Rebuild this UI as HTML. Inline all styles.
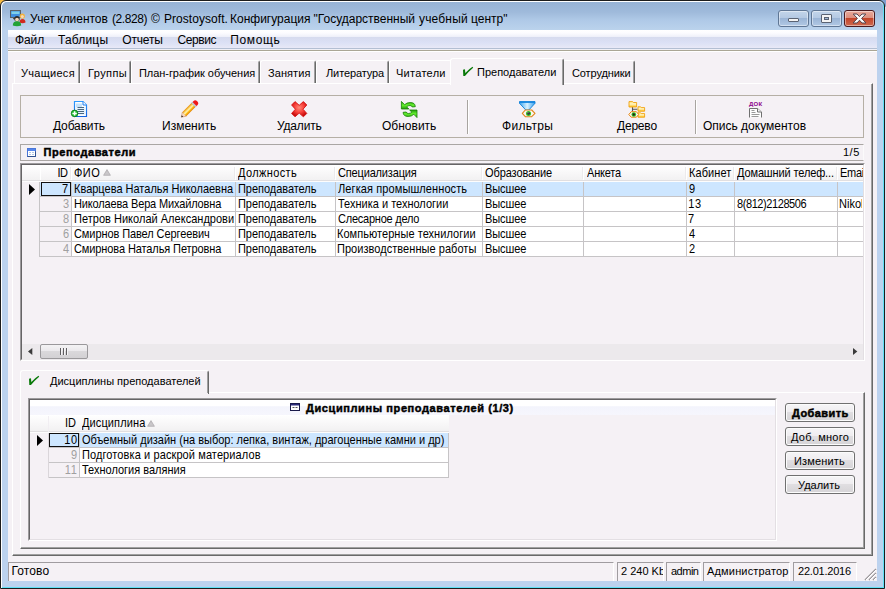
<!DOCTYPE html>
<html lang="ru"><head><meta charset="utf-8"><title>Учет клиентов</title>
<style>
html,body{margin:0;padding:0}
body{width:886px;height:589px;overflow:hidden;position:relative;background:#fff;font-family:"Liberation Sans",sans-serif;font-size:11px;color:#000}
div,svg.a,span.t{position:absolute}
.t{white-space:nowrap;display:block}
.clip{overflow:hidden}
#frame{left:0;top:0;width:885px;height:589px;background:#bcd2ee;border:1px solid #1c1c1c;border-radius:6px 6px 0 0;box-sizing:border-box;box-shadow:inset 1px 1px 0 #fff, inset -1px -1px 0 #5fe0f5}
#titlegrad{left:2px;top:2px;width:881px;height:28px;background:linear-gradient(#97b3d5 0,#9fbadb 10px,#afc9e7 18px,#bbd3ec 28px);border-radius:5px 5px 0 0}
#client{left:8px;top:30px;width:869px;height:551px;background:#f5f1f5}
</style></head>
<body>
<div id="cornerL" style="left:0;top:0;width:8px;height:8px;background:#f5b942"></div><div id="cornerR" style="left:878px;top:0;width:8px;height:589px;background:linear-gradient(#7f9fcf 0,#7f9fcf 6px,#b0b0b8 6px,#b0b0b8 7px,#dcdcee 7px)"></div>
<div id="frame"></div>
<div id="titlegrad"></div>
<div id="client"></div>
<svg class="a" style="left:10px;top:10px" width="17" height="17" viewBox="0 0 17 17">
<rect x="0.5" y="0.5" width="10" height="7" fill="#3f8fe0" stroke="#5b6166"/>
<rect x="1.5" y="1.5" width="8" height="2.5" fill="#7fd0e8"/>
<rect x="3" y="8" width="4" height="1.2" fill="#555"/>
<circle cx="12.3" cy="6" r="2.6" fill="#f2b13a"/>
<circle cx="12.3" cy="6.5" r="1.5" fill="#f9d9b8"/>
<path d="M9.5 12.5 q0-3.5 3-3.5 q3 0 3 3.5 q-3 1.3-6 0z" fill="#d22a1e"/>
<circle cx="7" cy="8.7" r="2.7" fill="#2a2a2a"/>
<circle cx="7" cy="9.6" r="1.9" fill="#f7d6b5"/>
<path d="M2.8 15.5 q0-4.3 4.2-4.3 q4.200 0 4.200 4.300 q-4.200 1.600-8.400 0z" fill="#21a336"/>
</svg>
<span class="t" id="t1" style="left:30px;top:10.84px;font-size:12px;line-height:16px;letter-spacing:-0.333px;">Учет</span>
<span class="t" id="t2" style="left:57.3px;top:10.84px;font-size:12px;line-height:16px;letter-spacing:-0.043px;">клиентов</span>
<span class="t" id="t3" style="left:112px;top:10.84px;font-size:12px;line-height:16px;letter-spacing:-0.417px;">(2.828)</span>
<span class="t" id="t4" style="left:151px;top:10.84px;font-size:12px;line-height:16px;">©</span>
<span class="t" id="t5" style="left:164px;top:10.84px;font-size:12px;line-height:16px;letter-spacing:0.045px;">Prostoysoft.</span>
<span class="t" id="t6" style="left:230px;top:10.84px;font-size:12px;line-height:16px;">Конфигурация</span>
<span class="t" id="t7" style="left:313.5px;top:10.84px;font-size:12px;line-height:16px;">"Государственный</span>
<span class="t" id="t8" style="left:419px;top:10.84px;font-size:12px;line-height:16px;letter-spacing:0.167px;">учебный</span>
<span class="t" id="t9" style="left:471px;top:10.84px;font-size:12px;line-height:16px;">центр"</span>
<div class="a" style="left:778px;top:10px;width:31px;height:17px;background:linear-gradient(#c3d5ea 0%,#b4c9e3 45%,#9bb5d6 50%,#b1c8e4 100%);border:1px solid #5f7694;border-radius:3px;box-shadow:inset 0 0 0 1px rgba(255,255,255,.45);box-sizing:border-box"></div>
<div class="a" style="left:811px;top:10px;width:31px;height:17px;background:linear-gradient(#c3d5ea 0%,#b4c9e3 45%,#9bb5d6 50%,#b1c8e4 100%);border:1px solid #5f7694;border-radius:3px;box-shadow:inset 0 0 0 1px rgba(255,255,255,.45);box-sizing:border-box"></div>
<div class="a" style="left:844px;top:10px;width:31px;height:17px;background:linear-gradient(#e9a99a 0%,#dc8f7f 45%,#c4452a 50%,#cf6a50 100%);border:1px solid #4a1a1f;border-radius:3px;box-shadow:inset 0 0 0 1px rgba(255,255,255,.45);box-sizing:border-box"></div>
<div class="a" style="left:788px;top:18px;width:11px;height:4px;background:#f4f4f4;border:1px solid #5a6373;border-radius:1px;box-sizing:border-box"></div>
<div class="a" style="left:821px;top:14px;width:11px;height:9px;background:#f4f4f4;border:1px solid #5a6373;border-radius:1px;box-sizing:border-box"></div>
<div class="a" style="left:824px;top:17px;width:5px;height:3px;background:#9fb6d4;border:1px solid #5a6373;box-sizing:border-box"></div>
<svg class="a" style="left:852px;top:13px" width="15" height="11" viewBox="0 0 15 11"><path d="M1.200 1 h3.800 l2.500 2.600 l2.500-2.600 h3.800 l-4.200 4.400 l4.400 4.600 h-4 l-2.500-2.800 l-2.500 2.800 h-4 l4.400-4.600z" fill="#fbfbfb" stroke="#564650" stroke-width="1" stroke-linejoin="round"/></svg>
<div class="a" style="left:8px;top:30px;width:869px;height:18px;background:linear-gradient(#ffffff 0,#fcfcff 3px,#eff1fa 6.500px,#d6dbee 7px,#dbe0f5 12px,#e0e4f6 15px,#e9e9f7 18px);"></div>
<div class="a" style="left:8px;top:48px;width:869px;height:1px;background:#b3bfd3"></div>
<div class="a" style="left:8px;top:49px;width:869px;height:1px;background:#f0f0f7"></div>
<div class="a" style="left:8px;top:50px;width:869px;height:1px;background:#aaa695"></div>
<div class="a" style="left:8px;top:51px;width:869px;height:1px;background:#ffffff"></div>
<span class="t" id="t10" style="left:15px;top:31.84px;font-size:12px;line-height:16px;letter-spacing:-0.100px;">Файл</span>
<span class="t" id="t11" style="left:58px;top:31.84px;font-size:12px;line-height:16px;letter-spacing:0.167px;">Таблицы</span>
<span class="t" id="t12" style="left:122.3px;top:31.84px;font-size:12px;line-height:16px;letter-spacing:-0.180px;">Отчеты</span>
<span class="t" id="t13" style="left:177.4px;top:31.84px;font-size:12px;line-height:16px;letter-spacing:-0.400px;">Сервис</span>
<span class="t" id="t14" style="left:230.3px;top:31.84px;font-size:12px;line-height:16px;letter-spacing:0.620px;">Помощь</span>
<div class="a" style="left:12px;top:83px;width:861px;height:473px;background:#f5f1f5;border-left:1px solid #fff;border-top:1px solid #fff;border-right:1px solid #696969;border-bottom:1px solid #696969;box-sizing:border-box"></div>
<div class="a" style="left:13px;top:84px;width:859px;height:471px;border-right:1px solid #a0a0a0;border-bottom:1px solid #a0a0a0;box-sizing:border-box"></div>
<div class="a" style="left:14px;top:60px;width:66px;height:23px;background:#f5f1f5;border-left:1px solid #fff;border-top:1px solid #fff;border-right:1px solid #696969;border-top-left-radius:3px;border-top-right-radius:3px;box-sizing:border-box"></div>
<div class="a" style="left:78px;top:62px;width:1px;height:21px;background:#a0a0a0"></div>
<div class="a" style="left:80px;top:60px;width:51px;height:23px;background:#f5f1f5;border-left:1px solid #fff;border-top:1px solid #fff;border-right:1px solid #696969;border-top-left-radius:3px;border-top-right-radius:3px;box-sizing:border-box"></div>
<div class="a" style="left:129px;top:62px;width:1px;height:21px;background:#a0a0a0"></div>
<div class="a" style="left:131px;top:60px;width:129px;height:23px;background:#f5f1f5;border-left:1px solid #fff;border-top:1px solid #fff;border-right:1px solid #696969;border-top-left-radius:3px;border-top-right-radius:3px;box-sizing:border-box"></div>
<div class="a" style="left:258px;top:62px;width:1px;height:21px;background:#a0a0a0"></div>
<div class="a" style="left:260px;top:60px;width:56px;height:23px;background:#f5f1f5;border-left:1px solid #fff;border-top:1px solid #fff;border-right:1px solid #696969;border-top-left-radius:3px;border-top-right-radius:3px;box-sizing:border-box"></div>
<div class="a" style="left:314px;top:62px;width:1px;height:21px;background:#a0a0a0"></div>
<div class="a" style="left:316px;top:60px;width:73px;height:23px;background:#f5f1f5;border-left:1px solid #fff;border-top:1px solid #fff;border-right:1px solid #696969;border-top-left-radius:3px;border-top-right-radius:3px;box-sizing:border-box"></div>
<div class="a" style="left:387px;top:62px;width:1px;height:21px;background:#a0a0a0"></div>
<div class="a" style="left:389px;top:60px;width:63px;height:23px;background:#f5f1f5;border-left:1px solid #fff;border-top:1px solid #fff;border-top-left-radius:3px;border-top-right-radius:3px;box-sizing:border-box"></div>
<div class="a" style="left:562px;top:60px;width:73px;height:23px;background:#f5f1f5;border-left:1px solid #fff;border-top:1px solid #fff;border-right:1px solid #696969;border-top-left-radius:3px;border-top-right-radius:3px;box-sizing:border-box"></div>
<div class="a" style="left:633px;top:62px;width:1px;height:21px;background:#a0a0a0"></div>
<div class="a" style="left:450px;top:58px;width:114px;height:27px;background:#f5f1f5;border-left:1px solid #fff;border-top:1px solid #fff;border-right:1px solid #696969;border-top-left-radius:3px;border-top-right-radius:3px;box-sizing:border-box"></div>
<div class="a" style="left:562px;top:60px;width:1px;height:25px;background:#a0a0a0"></div>
<span class="t" id="t15" style="left:21px;top:65.69px;font-size:11px;line-height:15px;letter-spacing:0.286px;">Учащиеся</span>
<span class="t" id="t16" style="left:88px;top:65.69px;font-size:11px;line-height:15px;letter-spacing:0.400px;">Группы</span>
<span class="t" id="t17" style="left:139px;top:65.69px;font-size:11px;line-height:15px;letter-spacing:-0.053px;">План-график обучения</span>
<span class="t" id="t18" style="left:268px;top:65.69px;font-size:11px;line-height:15px;letter-spacing:0.083px;">Занятия</span>
<span class="t" id="t19" style="left:326px;top:65.69px;font-size:11px;line-height:15px;letter-spacing:-0.111px;">Литература</span>
<span class="t" id="t20" style="left:396px;top:65.69px;font-size:11px;line-height:15px;letter-spacing:0.286px;">Читатели</span>
<span class="t" id="t21" style="left:572px;top:65.69px;font-size:11px;line-height:15px;letter-spacing:-0.111px;">Сотрудники</span>
<span class="t" id="t22" style="left:477px;top:64.69px;font-size:11px;line-height:15px;">Преподаватели</span>
<svg class="a" style="left:462px;top:66px" width="12" height="11" viewBox="0 0 12 11"><path d="M1 3.700 L3 3.200 L3.300 7 Q7 3 10.500 0.800 L11.200 1.700 Q6 6 3 10 L1.300 10 Z" fill="#0a7a0a"/></svg>
<div class="a" style="left:20px;top:95px;width:844px;height:43px;border:1px solid #b5afa5;box-sizing:border-box"></div>
<div class="a" style="left:467px;top:100px;width:1px;height:34px;background:#a8a4a0"></div>
<div class="a" style="left:468px;top:100px;width:1px;height:34px;background:#fff"></div>
<div class="a" style="left:695px;top:100px;width:1px;height:34px;background:#a8a4a0"></div>
<div class="a" style="left:696px;top:100px;width:1px;height:34px;background:#fff"></div>
<span class="t" id="t23" style="left:53px;top:117.84px;font-size:12px;line-height:16px;letter-spacing:-0.143px;">Добавить</span>
<span class="t" id="t24" style="left:162px;top:117.84px;font-size:12px;line-height:16px;">Изменить</span>
<span class="t" id="t25" style="left:277px;top:117.84px;font-size:12px;line-height:16px;letter-spacing:-0.167px;">Удалить</span>
<span class="t" id="t26" style="left:382px;top:117.84px;font-size:12px;line-height:16px;">Обновить</span>
<span class="t" id="t27" style="left:502px;top:117.84px;font-size:12px;line-height:16px;letter-spacing:0.333px;">Фильтры</span>
<span class="t" id="t28" style="left:617px;top:117.84px;font-size:12px;line-height:16px;letter-spacing:-0.200px;">Дерево</span>
<span class="t" id="t29" style="left:703px;top:117.84px;font-size:12px;line-height:16px;">Опись документов</span>
<svg class="a" style="left:71px;top:101px;overflow:visible" width="17" height="17" viewBox="0 0 17 17"><defs><linearGradient id="gdoc" x1="0" y1="0" x2="0" y2="1"><stop offset="0" stop-color="#2f9bff"/><stop offset="1" stop-color="#1464e0"/></linearGradient></defs>
<path d="M3.500 0.500 h8.500 l3.500 3.500 v11.500 h-12z" fill="#fdfeff" stroke="url(#gdoc)" stroke-width="1.200"/><rect x="5" y="2.500" width="6" height="7" fill="#c4e2fb"/><rect x="5" y="6" width="9" height="8" fill="#e6f3fe"/>
<path d="M12 0.500 v3.500 h3.500" fill="#fff" stroke="#1f7ff0" stroke-linejoin="round"/>
<path d="M6.500 6.500h6.500M6.500 8.500h6.500M6.500 10.500h6.500M6.500 12.500h6.500" stroke="#4b6880"/>
<circle cx="3.600" cy="12.400" r="3.300" fill="#22c030" stroke="#0a7d18" stroke-width=".9"/><path d="M3.600 10.200v4.400M1.400 12.400h4.400" stroke="#fff" stroke-width="1.500"/></svg>
<svg class="a" style="left:181px;top:100.5px;overflow:visible" width="17" height="17" viewBox="0 0 17 17"><defs><linearGradient id="gpen" gradientUnits="userSpaceOnUse" x1="0" y1="-2.800" x2="0" y2="2.800"><stop offset="0" stop-color="#e88a00"/><stop offset=".35" stop-color="#ffe27a"/><stop offset=".5" stop-color="#fff3b8"/><stop offset=".7" stop-color="#ffc21c"/><stop offset="1" stop-color="#e07c00"/></linearGradient></defs>
<g transform="translate(0.300 16.200) rotate(-45)"><path d="M0 0 L4.200 -2.800 V2.800z" fill="#f9d9c2" stroke="#c98f6a" stroke-width=".6"/><path d="M0 0 L1.700 -1.100 V1.100z" fill="#2b2b2b"/>
<rect x="4.200" y="-2.800" width="13" height="5.600" fill="url(#gpen)"/><rect x="17.200" y="-2.800" width="1.500" height="5.600" fill="#c9d3da" stroke="#8c98a2" stroke-width=".4"/>
<path d="M18.700 -2.800 h1.500 q2.300 0 2.300 2.800 q0 2.800 -2.300 2.800 h-1.500z" fill="#f01818"/></g></svg>
<svg class="a" style="left:291px;top:101px;overflow:visible" width="17" height="17" viewBox="0 0 17 17"><defs><radialGradient id="gx" cx=".5" cy=".4" r=".6"><stop offset="0" stop-color="#ff8a78"/><stop offset=".55" stop-color="#f8403a"/><stop offset="1" stop-color="#c40808"/></radialGradient></defs>
<path d="M4 0.600 L8.200 4.300 L12.400 0.600 L15.800 4 L12 8.200 L15.800 12.400 L12.400 15.800 L8.200 12.100 L4 15.800 L0.600 12.400 L4.400 8.200 L0.600 4 Z" fill="url(#gx)" stroke="#d61414" stroke-width=".9" stroke-linejoin="round"/></svg>
<svg class="a" style="left:401px;top:101px;overflow:visible" width="17" height="17" viewBox="0 0 17 17"><defs><linearGradient id="ggr" x1="0" y1="0" x2="0" y2="1"><stop offset="0" stop-color="#2aa20a"/><stop offset=".5" stop-color="#66f030"/><stop offset="1" stop-color="#1f9a08"/></linearGradient></defs><path d="M0.400 0.400 V8 H7.800 L5.600 5.800 Q7 4.500 9 4.500 Q10.800 4.500 11.200 6 L14.300 5.700 Q14.200 1.600 9.200 1.500 Q5.800 1.500 3.600 3.700 Z" fill="url(#ggr)" stroke="#168206" stroke-width=".8" stroke-linejoin="round"/><g transform="rotate(180 8.200 8.500)"><path d="M0.400 0.400 V8 H7.800 L5.600 5.800 Q7 4.500 9 4.500 Q10.800 4.500 11.200 6 L14.300 5.700 Q14.200 1.600 9.200 1.500 Q5.800 1.500 3.600 3.700 Z" fill="url(#ggr)" stroke="#168206" stroke-width=".8" stroke-linejoin="round"/></g></svg>
<svg class="a" style="left:519px;top:101px;overflow:visible" width="17" height="17" viewBox="0 0 17 17"><defs><linearGradient id="gfl" x1="0" y1="0" x2="1" y2="0"><stop offset="0" stop-color="#3aa6f0"/><stop offset=".5" stop-color="#d8f1ff"/><stop offset="1" stop-color="#2f9ced"/></linearGradient></defs>
<path d="M0.500 0.600 H16 V2.300 L9.800 9 H6.800 L0.500 2.300z" fill="url(#gfl)" stroke="#0e7fd6" stroke-width=".9" stroke-linejoin="round"/><path d="M0.500 1.200 H16" stroke="#1384de" stroke-width="1.400"/>
<path d="M3.300 12.300 L6.300 9 H12.700 L16 12.300 L12.700 15.700 H6.300z" fill="#fbf6ee" stroke="#e0861a" stroke-width="1.100" stroke-linejoin="round"/>
<circle cx="9.500" cy="12.400" r="2.500" fill="#34c21e"/><circle cx="9.500" cy="12.400" r="1.300" fill="#2a2a3a"/><circle cx="9" cy="11.800" r=".5" fill="#ddd"/></svg>
<svg class="a" style="left:628px;top:101px;overflow:visible" width="17" height="17" viewBox="0 0 17 17"><defs><linearGradient id="gfo" x1="0" y1="0" x2="0" y2="1"><stop offset="0" stop-color="#ffe88a"/><stop offset=".45" stop-color="#fff5c4"/><stop offset="1" stop-color="#ffc21a"/></linearGradient></defs>
<path d="M4.500 6 V10.500 M4.500 8.300 H9.500" stroke="#555" fill="none" stroke-width="1.100"/>
<path d="M1 0.600 H4.600 L5.400 1.500 H8.600 V6 H1z" fill="url(#gfo)" stroke="#f0a010" stroke-width=".9" stroke-linejoin="round"/>
<path d="M10 5.800 H12.600 L13.300 6.600 H16.600 V10.200 H10z" fill="url(#gfo)" stroke="#f0a010" stroke-width=".9" stroke-linejoin="round"/>
<path d="M10 11.800 H12.600 L13.300 12.600 H16.600 V16.200 H10z" fill="url(#gfo)" stroke="#f0a010" stroke-width=".9" stroke-linejoin="round"/>
<path d="M0.800 13.500 L3.200 10.700 H8.400 L10.700 13.500 L8.400 16.200 H3.200z" fill="#fbf6ee" stroke="#e8860e" stroke-width="1" stroke-linejoin="round"/>
<circle cx="5.800" cy="13.500" r="2.300" fill="#34c21e"/><circle cx="5.800" cy="13.500" r="1.200" fill="#222"/></svg>
<svg class="a" style="left:747px;top:100.5px;overflow:visible" width="17" height="17" viewBox="0 0 17 17"><path d="M2.500 16.500 V7.500 H10.500 L14.500 11 V16.500" fill="#fdfdfd" stroke="#707070"/><path d="M10.500 7.500 V11 H14.500" fill="#f4f4f4" stroke="#707070"/><path d="M4.500 9.500h3M4.500 11.500h4M4.500 13.500h8M4.500 15.500h7" stroke="#9a9a9a"/></svg>
<span class="t" id="t30" style="left:749px;top:98.92px;font-size:6px;line-height:10px;font-weight:bold;-webkit-text-stroke:0.45px;color:#8b008b;letter-spacing:0.250px;-webkit-text-stroke:0;">ДОК</span>
<div class="a" style="left:20px;top:144px;width:844px;height:17px;border:1px solid #aaa6a4;border-right-color:#fbfafb;box-sizing:border-box"></div>
<svg class="a" style="left:27px;top:148px" width="9" height="9" viewBox="0 0 9 9"><rect x=".5" y=".5" width="8" height="8" fill="#fff" stroke="#4a76d8"/><rect x="1" y="1" width="7" height="2" fill="#5585ec"/><path d="M2 4.500h2M5 4.500h2M2 6.500h2M5 6.500h2" stroke="#b3c4e6"/><path d="M0.500 8.500H8.500V3.500" stroke="#2f4f8e" fill="none"/></svg>
<span class="t" id="t31" style="left:43.5px;top:144.69px;font-size:11px;line-height:15px;font-weight:bold;-webkit-text-stroke:0.45px;letter-spacing:0.583px;">Преподаватели</span>
<span class="t" id="t32" style="left:843px;top:144.69px;font-size:11px;line-height:15px;letter-spacing:0.500px;">1/5</span>
<div class="a" style="left:20px;top:163px;width:845px;height:198px;background:#f5f1f5;border-top:1px solid #9c9a9c;border-left:1px solid #9c9a9c;border-right:1px solid #fff;border-bottom:1px solid #fff;box-sizing:border-box"></div>
<div class="a" style="left:21px;top:164px;width:843px;height:196px;border-top:1px solid #666466;border-left:1px solid #666466;border-right:1px solid #e3dfe3;border-bottom:1px solid #e3dfe3;box-sizing:border-box"></div>
<div class="a" style="left:22px;top:165px;width:841px;height:15px;background:linear-gradient(#ffffff,#f8f7f8 55%,#f2f1f2);"></div>
<div class="a" style="left:22px;top:180px;width:841px;height:1px;background:#e1dfe1"></div>
<div class="a" style="left:40px;top:166px;width:1px;height:14px;background:#ffffff"></div>
<div class="a" style="left:71px;top:165px;width:1px;height:15px;background:#ffffff"></div>
<div class="a" style="left:70px;top:167px;width:1px;height:12px;background:#eceaec"></div>
<div class="a" style="left:235px;top:165px;width:1px;height:15px;background:#ffffff"></div>
<div class="a" style="left:234px;top:167px;width:1px;height:12px;background:#eceaec"></div>
<div class="a" style="left:335px;top:165px;width:1px;height:15px;background:#ffffff"></div>
<div class="a" style="left:334px;top:167px;width:1px;height:12px;background:#eceaec"></div>
<div class="a" style="left:482px;top:165px;width:1px;height:15px;background:#ffffff"></div>
<div class="a" style="left:481px;top:167px;width:1px;height:12px;background:#eceaec"></div>
<div class="a" style="left:583px;top:165px;width:1px;height:15px;background:#ffffff"></div>
<div class="a" style="left:582px;top:167px;width:1px;height:12px;background:#eceaec"></div>
<div class="a" style="left:686px;top:165px;width:1px;height:15px;background:#ffffff"></div>
<div class="a" style="left:685px;top:167px;width:1px;height:12px;background:#eceaec"></div>
<div class="a" style="left:734px;top:165px;width:1px;height:15px;background:#ffffff"></div>
<div class="a" style="left:733px;top:167px;width:1px;height:12px;background:#eceaec"></div>
<div class="a" style="left:837px;top:165px;width:1px;height:15px;background:#ffffff"></div>
<div class="a" style="left:836px;top:167px;width:1px;height:12px;background:#eceaec"></div>
<div class="a" style="left:72px;top:182px;width:791px;height:15px;background:#cde6ff"></div>
<div class="a" style="left:40px;top:182px;width:32px;height:15px;background:#cde6ff"></div>
<div class="a" style="left:40px;top:196px;width:823px;height:1px;background:#c6c4c6"></div>
<div class="a" style="left:72px;top:197px;width:791px;height:15px;background:#fff"></div>
<div class="a" style="left:40px;top:197px;width:32px;height:15px;background:#f5f1f5"></div>
<div class="a" style="left:40px;top:211px;width:823px;height:1px;background:#c6c4c6"></div>
<div class="a" style="left:72px;top:212px;width:791px;height:15px;background:#fff"></div>
<div class="a" style="left:40px;top:212px;width:32px;height:15px;background:#f5f1f5"></div>
<div class="a" style="left:40px;top:226px;width:823px;height:1px;background:#c6c4c6"></div>
<div class="a" style="left:72px;top:227px;width:791px;height:15px;background:#fff"></div>
<div class="a" style="left:40px;top:227px;width:32px;height:15px;background:#f5f1f5"></div>
<div class="a" style="left:40px;top:241px;width:823px;height:1px;background:#c6c4c6"></div>
<div class="a" style="left:72px;top:242px;width:791px;height:15px;background:#fff"></div>
<div class="a" style="left:40px;top:242px;width:32px;height:15px;background:#f5f1f5"></div>
<div class="a" style="left:40px;top:256px;width:823px;height:1px;background:#c6c4c6"></div>
<div class="a" style="left:39px;top:182px;width:1px;height:75px;background:#c6c4c6"></div>
<div class="a" style="left:71px;top:182px;width:1px;height:75px;background:#c6c4c6"></div>
<div class="a" style="left:235px;top:182px;width:1px;height:75px;background:#c6c4c6"></div>
<div class="a" style="left:335px;top:182px;width:1px;height:75px;background:#c6c4c6"></div>
<div class="a" style="left:482px;top:182px;width:1px;height:75px;background:#c6c4c6"></div>
<div class="a" style="left:583px;top:182px;width:1px;height:75px;background:#c6c4c6"></div>
<div class="a" style="left:686px;top:182px;width:1px;height:75px;background:#c6c4c6"></div>
<div class="a" style="left:734px;top:182px;width:1px;height:75px;background:#c6c4c6"></div>
<div class="a" style="left:837px;top:182px;width:1px;height:75px;background:#c6c4c6"></div>
<div class="a" style="left:22px;top:181px;width:841px;height:1px;background:#fdfdfd"></div>
<div class="a" style="left:41px;top:182px;width:30px;height:14px;border:1px solid #111;box-sizing:border-box"></div>
<svg class="a" style="left:29px;top:184px" width="6" height="11" viewBox="0 0 6 11"><path d="M0 0 L6 5.500 L0 11z" fill="#000"/></svg>
<span class="t" id="t33" style="left:57.5px;top:165.69px;font-size:11px;line-height:15px;letter-spacing:-0.500px;transform:scaleY(1.1);transform-origin:0 11.31px;">ID</span>
<span class="t" id="t34" style="left:74px;top:165.69px;font-size:11px;line-height:15px;letter-spacing:0.500px;transform:scaleY(1.1);transform-origin:0 11.31px;">ФИО</span>
<span class="t" id="t35" style="left:238px;top:165.69px;font-size:11px;line-height:15px;letter-spacing:0.375px;transform:scaleY(1.1);transform-origin:0 11.31px;">Должность</span>
<span class="t" id="t36" style="left:338px;top:165.69px;font-size:11px;line-height:15px;letter-spacing:-0.167px;transform:scaleY(1.1);transform-origin:0 11.31px;">Специализация</span>
<span class="t" id="t37" style="left:485px;top:165.69px;font-size:11px;line-height:15px;letter-spacing:-0.100px;transform:scaleY(1.1);transform-origin:0 11.31px;">Образование</span>
<span class="t" id="t38" style="left:587px;top:165.69px;font-size:11px;line-height:15px;letter-spacing:-0.200px;transform:scaleY(1.1);transform-origin:0 11.31px;">Анкета</span>
<span class="t" id="t39" style="left:689px;top:165.69px;font-size:11px;line-height:15px;letter-spacing:0.083px;transform:scaleY(1.1);transform-origin:0 11.31px;">Кабинет</span>
<span class="t" id="t40" style="left:737px;top:165.69px;font-size:11px;line-height:15px;letter-spacing:-0.125px;transform:scaleY(1.1);transform-origin:0 11.31px;">Домашний телеф...</span>
<div class="clip" style="left:840px;top:165.69px;width:23px;height:15px"><span class="t" id="t41" style="left:0px;top:0;font-size:11px;line-height:15px;letter-spacing:-0.250px;transform:scaleY(1.1);transform-origin:0 11.31px;">Email</span></div>
<svg class="a" style="left:103px;top:169px" width="8" height="7" viewBox="0 0 8 7"><path d="M4 0.600 L7.400 6.300 H0.600z" fill="#c9c6c9" stroke="#a9a6a9" stroke-width=".7"/></svg>
<span class="t" id="t42" style="left:62px;top:181.69px;font-size:11px;line-height:15px;transform:scaleY(1.1);transform-origin:0 11.31px;">7</span>
<div class="clip" style="left:74px;top:181.69px;width:160px;height:15px"><span class="t" id="t43" style="left:0px;top:0;font-size:11px;line-height:15px;transform:scaleY(1.1);transform-origin:0 11.31px;">Кварцева Наталья Николаевна</span></div>
<span class="t" id="t44" style="left:238px;top:181.69px;font-size:11px;line-height:15px;letter-spacing:-0.042px;transform:scaleY(1.1);transform-origin:0 11.31px;">Преподаватель</span>
<span class="t" id="t45" style="left:338px;top:181.69px;font-size:11px;line-height:15px;letter-spacing:0.100px;transform:scaleY(1.1);transform-origin:0 11.31px;">Легкая промышленность</span>
<span class="t" id="t46" style="left:485px;top:181.69px;font-size:11px;line-height:15px;letter-spacing:-0.100px;transform:scaleY(1.1);transform-origin:0 11.31px;">Высшее</span>
<span class="t" id="t47" style="left:689px;top:181.69px;font-size:11px;line-height:15px;transform:scaleY(1.1);transform-origin:0 11.31px;">9</span>
<span class="t" id="t48" style="left:63px;top:196.69px;font-size:11px;line-height:15px;color:#a0a0a0;transform:scaleY(1.1);transform-origin:0 11.31px;">3</span>
<div class="clip" style="left:74px;top:196.69px;width:160px;height:15px"><span class="t" id="t49" style="left:0px;top:0;font-size:11px;line-height:15px;letter-spacing:-0.146px;transform:scaleY(1.1);transform-origin:0 11.31px;">Николаева Вера Михайловна</span></div>
<span class="t" id="t50" style="left:238px;top:196.69px;font-size:11px;line-height:15px;letter-spacing:-0.042px;transform:scaleY(1.1);transform-origin:0 11.31px;">Преподаватель</span>
<span class="t" id="t51" style="left:338px;top:196.69px;font-size:11px;line-height:15px;transform:scaleY(1.1);transform-origin:0 11.31px;">Техника и технологии</span>
<span class="t" id="t52" style="left:485px;top:196.69px;font-size:11px;line-height:15px;letter-spacing:-0.100px;transform:scaleY(1.1);transform-origin:0 11.31px;">Высшее</span>
<span class="t" id="t53" style="left:688.15px;top:196.69px;font-size:11px;line-height:15px;letter-spacing:0.700px;transform:scaleY(1.1);transform-origin:0 11.31px;">13</span>
<span class="t" id="t54" style="left:737px;top:196.69px;font-size:11px;line-height:15px;letter-spacing:-0.417px;transform:scaleY(1.1);transform-origin:0 11.31px;">8(812)2128506</span>
<div class="clip" style="left:839px;top:196.69px;width:23px;height:15px"><span class="t" id="t55" style="left:0px;top:0;font-size:11px;line-height:15px;transform:scaleY(1.1);transform-origin:0 11.31px;">Nikolaeva</span></div>
<span class="t" id="t56" style="left:63px;top:211.69px;font-size:11px;line-height:15px;color:#a0a0a0;transform:scaleY(1.1);transform-origin:0 11.31px;">8</span>
<div class="clip" style="left:74px;top:211.69px;width:160px;height:15px"><span class="t" id="t57" style="left:0px;top:0;font-size:11px;line-height:15px;letter-spacing:0.019px;transform:scaleY(1.1);transform-origin:0 11.31px;">Петров Николай Александрович</span></div>
<span class="t" id="t58" style="left:238px;top:211.69px;font-size:11px;line-height:15px;letter-spacing:-0.042px;transform:scaleY(1.1);transform-origin:0 11.31px;">Преподаватель</span>
<span class="t" id="t59" style="left:338px;top:211.69px;font-size:11px;line-height:15px;letter-spacing:-0.231px;transform:scaleY(1.1);transform-origin:0 11.31px;">Слесарное дело</span>
<span class="t" id="t60" style="left:485px;top:211.69px;font-size:11px;line-height:15px;letter-spacing:-0.100px;transform:scaleY(1.1);transform-origin:0 11.31px;">Высшее</span>
<span class="t" id="t61" style="left:688px;top:211.69px;font-size:11px;line-height:15px;transform:scaleY(1.1);transform-origin:0 11.31px;">7</span>
<span class="t" id="t62" style="left:63px;top:226.69px;font-size:11px;line-height:15px;color:#a0a0a0;transform:scaleY(1.1);transform-origin:0 11.31px;">6</span>
<div class="clip" style="left:73px;top:226.69px;width:160px;height:15px"><span class="t" id="t63" style="left:1px;top:0;font-size:11px;line-height:15px;letter-spacing:-0.091px;transform:scaleY(1.1);transform-origin:0 11.31px;">Смирнов Павел Сергеевич</span></div>
<span class="t" id="t64" style="left:238px;top:226.69px;font-size:11px;line-height:15px;letter-spacing:-0.042px;transform:scaleY(1.1);transform-origin:0 11.31px;">Преподаватель</span>
<span class="t" id="t65" style="left:337px;top:226.69px;font-size:11px;line-height:15px;letter-spacing:0.045px;transform:scaleY(1.1);transform-origin:0 11.31px;">Компьютерные технилогии</span>
<span class="t" id="t66" style="left:485px;top:226.69px;font-size:11px;line-height:15px;letter-spacing:-0.100px;transform:scaleY(1.1);transform-origin:0 11.31px;">Высшее</span>
<span class="t" id="t67" style="left:689px;top:226.69px;font-size:11px;line-height:15px;transform:scaleY(1.1);transform-origin:0 11.31px;">4</span>
<span class="t" id="t68" style="left:63px;top:241.69px;font-size:11px;line-height:15px;color:#a0a0a0;transform:scaleY(1.1);transform-origin:0 11.31px;">4</span>
<div class="clip" style="left:73px;top:241.69px;width:160px;height:15px"><span class="t" id="t69" style="left:1px;top:0;font-size:11px;line-height:15px;letter-spacing:-0.104px;transform:scaleY(1.1);transform-origin:0 11.31px;">Смирнова Наталья Петровна</span></div>
<span class="t" id="t70" style="left:238px;top:241.69px;font-size:11px;line-height:15px;letter-spacing:-0.042px;transform:scaleY(1.1);transform-origin:0 11.31px;">Преподаватель</span>
<span class="t" id="t71" style="left:337px;top:241.69px;font-size:11px;line-height:15px;letter-spacing:0.045px;transform:scaleY(1.1);transform-origin:0 11.31px;">Производственные работы</span>
<span class="t" id="t72" style="left:485px;top:241.69px;font-size:11px;line-height:15px;letter-spacing:-0.100px;transform:scaleY(1.1);transform-origin:0 11.31px;">Высшее</span>
<span class="t" id="t73" style="left:689px;top:241.69px;font-size:11px;line-height:15px;transform:scaleY(1.1);transform-origin:0 11.31px;">2</span>
<div class="a" style="left:22px;top:344px;width:841px;height:16px;background:#ece9ec;"></div>
<div class="a" style="left:40px;top:344px;width:48px;height:15px;background:linear-gradient(#f4f3f5 0%,#ebe9ec 45%,#dad8db 50%,#d3d1d4 100%);border:1px solid #9a989b;border-radius:2px;box-sizing:border-box"></div>
<div class="a" style="left:60px;top:348px;width:1px;height:7px;background:#5f5d60"></div>
<div class="a" style="left:61px;top:348px;width:1px;height:7px;background:#f4f3f5"></div>
<div class="a" style="left:63px;top:348px;width:1px;height:7px;background:#5f5d60"></div>
<div class="a" style="left:64px;top:348px;width:1px;height:7px;background:#f4f3f5"></div>
<div class="a" style="left:66px;top:348px;width:1px;height:7px;background:#5f5d60"></div>
<div class="a" style="left:67px;top:348px;width:1px;height:7px;background:#f4f3f5"></div>
<svg class="a" style="left:28px;top:348px" width="5" height="7" viewBox="0 0 5 7"><path d="M4.300 0 L0 3.500 L4.300 7z" fill="#3a3a3a"/></svg>
<svg class="a" style="left:853px;top:348px" width="5" height="7" viewBox="0 0 5 7"><path d="M0 0 L4.300 3.500 L0 7z" fill="#3a3a3a"/></svg>
<div class="a" style="left:20px;top:392px;width:845px;height:157px;background:#f5f1f5;border-left:1px solid #fff;border-top:1px solid #fff;border-right:1px solid #696969;border-bottom:1px solid #696969;box-sizing:border-box"></div>
<div class="a" style="left:21px;top:393px;width:843px;height:155px;border-right:1px solid #a0a0a0;border-bottom:1px solid #a0a0a0;box-sizing:border-box"></div>
<div class="a" style="left:20px;top:370px;width:189px;height:24px;background:#f5f1f5;border-left:1px solid #fff;border-top:1px solid #fff;border-right:1px solid #696969;border-top-left-radius:3px;border-top-right-radius:3px;box-sizing:border-box"></div>
<div class="a" style="left:207px;top:372px;width:1px;height:21px;background:#a0a0a0"></div>
<svg class="a" style="left:28px;top:375px" width="12" height="11" viewBox="0 0 12 11"><path d="M1 3.700 L3 3.200 L3.300 7 Q7 3 10.500 0.800 L11.200 1.700 Q6 6 3 10 L1.300 10 Z" fill="#0a7a0a"/></svg>
<span class="t" id="t74" style="left:50px;top:373.69px;font-size:11px;line-height:15px;">Дисциплины преподавателей</span>
<div class="a" style="left:28px;top:398px;width:749px;height:143px;background:#f5f1f5;border-top:1px solid #9c9a9c;border-left:1px solid #9c9a9c;border-right:1px solid #fff;border-bottom:1px solid #fff;box-sizing:border-box"></div>
<div class="a" style="left:29px;top:399px;width:747px;height:141px;border-top:1px solid #666466;border-left:1px solid #666466;border-right:1px solid #e3dfe3;border-bottom:1px solid #e3dfe3;box-sizing:border-box"></div>
<div class="a" style="left:30px;top:400px;width:745px;height:15px;background:linear-gradient(#ffffff 0%,#ffffff 38%,#f3f4fc 45%,#f6f6fd 100%);"></div>
<svg class="a" style="left:290px;top:403px" width="10" height="8" viewBox="0 0 10 8"><rect x=".5" y=".5" width="9" height="7" fill="#fff" stroke="#1a1a4a"/><rect x="1" y="1" width="8" height="1.500" fill="#2a2a7a"/><path d="M2.500 4.500h2M5.500 4.500h2" stroke="#555"/></svg>
<span class="t" id="t75" style="left:306px;top:400.69px;font-size:11px;line-height:15px;font-weight:bold;-webkit-text-stroke:0.45px;letter-spacing:0.600px;">Дисциплины преподавателей (1/3)</span>
<div class="a" style="left:30px;top:415px;width:419px;height:16px;background:linear-gradient(#ffffff,#f8f7f8 55%,#f2f1f2);"></div>
<div class="a" style="left:30px;top:431px;width:419px;height:1px;background:#e1dfe1"></div>
<div class="a" style="left:48px;top:416px;width:1px;height:16px;background:#f1eef2"></div>
<span class="t" id="t76" style="left:65px;top:415.69px;font-size:11px;line-height:15px;transform:scaleY(1.1);transform-origin:0 11.31px;">ID</span>
<span class="t" id="t77" style="left:82px;top:415.69px;font-size:11px;line-height:15px;letter-spacing:0.111px;transform:scaleY(1.1);transform-origin:0 11.31px;">Дисциплина</span>
<svg class="a" style="left:147px;top:420px" width="8" height="7" viewBox="0 0 8 7"><path d="M4 0.600 L7.400 6.300 H0.600z" fill="#c9c6c9" stroke="#a9a6a9" stroke-width=".7"/></svg>
<div class="a" style="left:80px;top:433px;width:369px;height:15px;background:#cde6ff"></div>
<div class="a" style="left:49px;top:433px;width:31px;height:15px;background:#cde6ff"></div>
<div class="a" style="left:49px;top:447px;width:400px;height:1px;background:#c6c4c6"></div>
<div class="a" style="left:80px;top:448px;width:369px;height:15px;background:#fff"></div>
<div class="a" style="left:49px;top:448px;width:31px;height:15px;background:#f5f1f5"></div>
<div class="a" style="left:49px;top:462px;width:400px;height:1px;background:#c6c4c6"></div>
<div class="a" style="left:80px;top:463px;width:369px;height:15px;background:#fff"></div>
<div class="a" style="left:49px;top:463px;width:31px;height:15px;background:#f5f1f5"></div>
<div class="a" style="left:49px;top:477px;width:400px;height:1px;background:#c6c4c6"></div>
<div class="a" style="left:30px;top:432px;width:419px;height:1px;background:#fdfdfd"></div>
<div class="a" style="left:79px;top:433px;width:1px;height:45px;background:#c6c4c6"></div>
<div class="a" style="left:448px;top:433px;width:1px;height:45px;background:#c6c4c6"></div>
<div class="a" style="left:48px;top:433px;width:1px;height:45px;background:#dad6da"></div>
<div class="a" style="left:49px;top:433px;width:30px;height:14px;border:1px solid #111;box-sizing:border-box"></div>
<svg class="a" style="left:37px;top:435px" width="6" height="11" viewBox="0 0 6 11"><path d="M0 0 L6 5.500 L0 11z" fill="#000"/></svg>
<span class="t" id="t78" style="left:64.15px;top:432.69px;font-size:11px;line-height:15px;letter-spacing:0.700px;transform:scaleY(1.1);transform-origin:0 11.31px;">10</span>
<span class="t" id="t79" style="left:82px;top:432.69px;font-size:11px;line-height:15px;transform:scaleY(1.1);transform-origin:0 11.31px;">Объемный дизайн (на выбор: лепка, винтаж, драгоценные камни и др)</span>
<span class="t" id="t80" style="left:71px;top:447.69px;font-size:11px;line-height:15px;color:#a0a0a0;transform:scaleY(1.1);transform-origin:0 11.31px;">9</span>
<span class="t" id="t81" style="left:82px;top:447.69px;font-size:11px;line-height:15px;letter-spacing:0.100px;transform:scaleY(1.1);transform-origin:0 11.31px;">Подготовка и раскрой материалов</span>
<span class="t" id="t82" style="left:64.65px;top:462.69px;font-size:11px;line-height:15px;color:#a0a0a0;letter-spacing:0.700px;transform:scaleY(1.1);transform-origin:0 11.31px;">11</span>
<span class="t" id="t83" style="left:82px;top:462.69px;font-size:11px;line-height:15px;transform:scaleY(1.1);transform-origin:0 11.31px;">Технология валяния</span>
<div class="a" style="left:785px;top:403px;width:70px;height:19px;background:linear-gradient(#f6f5f7 0%,#efedf0 45%,#e0dee1 50%,#d6d4d7 100%);border:1px solid #707070;border-radius:3px;box-shadow:inset 0 0 0 1px #fcfcfc;box-sizing:border-box"></div>
<span class="t" id="t84" style="left:792px;top:405.69px;font-size:11px;line-height:15px;font-weight:bold;-webkit-text-stroke:0.45px;letter-spacing:0.429px;">Добавить</span>
<div class="a" style="left:785px;top:427px;width:70px;height:19px;background:linear-gradient(#f6f5f7 0%,#efedf0 45%,#e0dee1 50%,#d6d4d7 100%);border:1px solid #707070;border-radius:3px;box-shadow:inset 0 0 0 1px #fcfcfc;box-sizing:border-box"></div>
<span class="t" id="t85" style="left:791px;top:429.69px;font-size:11px;line-height:15px;letter-spacing:0.222px;">Доб. много</span>
<div class="a" style="left:785px;top:451px;width:70px;height:19px;background:linear-gradient(#f6f5f7 0%,#efedf0 45%,#e0dee1 50%,#d6d4d7 100%);border:1px solid #707070;border-radius:3px;box-shadow:inset 0 0 0 1px #fcfcfc;box-sizing:border-box"></div>
<span class="t" id="t86" style="left:794px;top:453.69px;font-size:11px;line-height:15px;letter-spacing:0.143px;">Изменить</span>
<div class="a" style="left:785px;top:475px;width:70px;height:19px;background:linear-gradient(#f6f5f7 0%,#efedf0 45%,#e0dee1 50%,#d6d4d7 100%);border:1px solid #707070;border-radius:3px;box-shadow:inset 0 0 0 1px #fcfcfc;box-sizing:border-box"></div>
<span class="t" id="t87" style="left:798px;top:477.69px;font-size:11px;line-height:15px;">Удалить</span>
<div class="a" style="left:8px;top:562px;width:606px;height:19px;border-left:1px solid #a09ca0;border-top:1px solid #a09ca0;border-right:1px solid #fff;box-sizing:border-box"></div>
<div class="a" style="left:617px;top:562px;width:47px;height:19px;border-left:1px solid #a09ca0;border-top:1px solid #a09ca0;border-right:1px solid #fff;box-sizing:border-box"></div>
<div class="a" style="left:666px;top:562px;width:35px;height:19px;border-left:1px solid #a09ca0;border-top:1px solid #a09ca0;border-right:1px solid #fff;box-sizing:border-box"></div>
<div class="a" style="left:703px;top:562px;width:87px;height:19px;border-left:1px solid #a09ca0;border-top:1px solid #a09ca0;border-right:1px solid #fff;box-sizing:border-box"></div>
<div class="a" style="left:793px;top:562px;width:64px;height:19px;border-left:1px solid #a09ca0;border-top:1px solid #a09ca0;border-right:1px solid #fff;box-sizing:border-box"></div>
<span class="t" id="t88" style="left:11.5px;top:562.84px;font-size:12px;line-height:16px;letter-spacing:0.100px;">Готово</span>
<div class="clip" style="left:620px;top:563.69px;width:43px;height:15px"><span class="t" id="t89" style="left:1px;top:0;font-size:11px;line-height:15px;">2 240 Kb</span></div>
<span class="t" id="t90" style="left:671px;top:563.69px;font-size:11px;line-height:15px;letter-spacing:-0.500px;">admin</span>
<span class="t" id="t91" style="left:707px;top:563.69px;font-size:11px;line-height:15px;letter-spacing:0.167px;">Администратор</span>
<span class="t" id="t92" style="left:798px;top:563.69px;font-size:11px;line-height:15px;letter-spacing:-0.222px;">22.01.2016</span>
<svg class="a" style="left:864px;top:568px" width="13" height="13" viewBox="0 0 13 13"><path d="M12 1 L1 12 M12 5 L5 12 M12 9 L9 12" stroke="#9c989c" stroke-width="1.500"/><path d="M12 2 L2 12 M12 6 L6 12 M12 10 L10 12" stroke="#fff" stroke-width="1"/></svg>
</body></html>
